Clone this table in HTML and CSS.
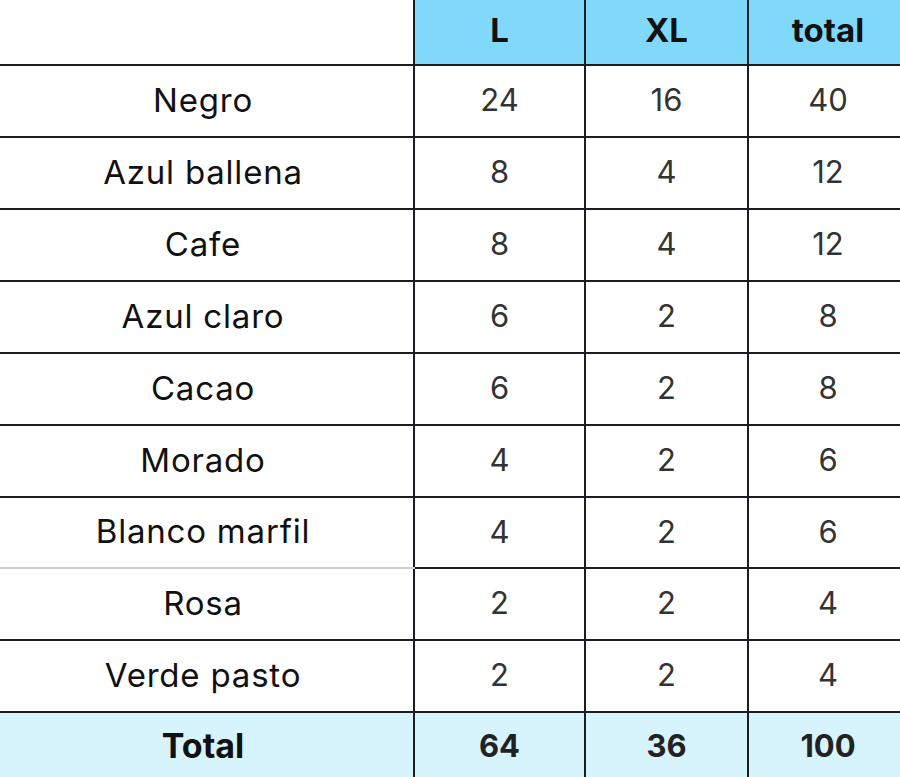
FILE: index.html
```html
<!DOCTYPE html>
<html lang="es">
<head>
<meta charset="utf-8">
<title>Tabla</title>
<link rel="stylesheet" href="styles.css">
</head>
<body>
<table class="grid">
  <colgroup>
    <col class="c-name">
    <col class="c-l">
    <col class="c-xl">
    <col class="c-total">
  </colgroup>
  <thead>
    <tr class="head">
      <th class="blank"></th>
      <th>L</th>
      <th>XL</th>
      <th>total</th>
    </tr>
  </thead>
  <tbody>
    <tr><td class="name">Negro</td><td>24</td><td>16</td><td>40</td></tr>
    <tr><td class="name">Azul ballena</td><td>8</td><td>4</td><td>12</td></tr>
    <tr><td class="name">Cafe</td><td>8</td><td>4</td><td>12</td></tr>
    <tr><td class="name">Azul claro</td><td>6</td><td>2</td><td>8</td></tr>
    <tr><td class="name">Cacao</td><td>6</td><td>2</td><td>8</td></tr>
    <tr><td class="name">Morado</td><td>4</td><td>2</td><td>6</td></tr>
    <tr class="short"><td class="name soft">Blanco marfil</td><td>4</td><td>2</td><td>6</td></tr>
    <tr><td class="name">Rosa</td><td>2</td><td>2</td><td>4</td></tr>
    <tr><td class="name">Verde pasto</td><td>2</td><td>2</td><td>4</td></tr>
  </tbody>
  <tfoot>
    <tr class="foot"><th>Total</th><td>64</td><td>36</td><td>100</td></tr>
  </tfoot>
</table>
</body>
</html>
```

FILE: styles.css
```css
html, body {
  margin: 0;
  padding: 0;
  background: #ffffff;
}

.grid {
  width: 900px;
  table-layout: fixed;
  border-collapse: collapse;
  border: none;
  font-family: "Inter", "Liberation Sans", sans-serif;
}

.c-name { width: 414px; }
.c-l { width: 171px; }
.c-xl { width: 163px; }
.c-total { width: 152px; }

.grid th,
.grid td {
  border: 2px solid #1c1c24;
  padding: 0;
  text-align: center;
  vertical-align: middle;
}

.grid tr > :first-child { border-left: none; padding-right: 7px; }
.grid tr > :last-child { border-right: none; padding-left: 7px; }
.grid .head > th { border-top: none; }
.grid .foot > th,
.grid .foot > td { border-bottom: none; }

.head { height: 65px; }
.grid .head th {
  background: #80d9fb;
  color: #111;
  font-weight: 700;
  font-size: 33px;
  padding-bottom: 5px;
}
.grid .head th.blank { background: #ffffff; }

tbody tr { height: 72px; }
tbody tr.short { height: 71px; }

.grid td {
  font-size: 31px;
  font-weight: 400;
  color: #333;
  padding-bottom: 3px;
}
.grid td.name {
  font-size: 33px;
  letter-spacing: 0.8px;
  color: #111;
}
.grid td.soft { border-bottom-color: #cfcfcf; }

.foot { height: 65px; }
.grid .foot > th,
.grid .foot > td {
  background: #d7f3fc;
  font-weight: 700;
  color: #111;
  padding-bottom: 0;
}
.grid .foot > th { font-size: 34px; }
.grid .foot > td { color: #222; font-size: 31px; }
```
